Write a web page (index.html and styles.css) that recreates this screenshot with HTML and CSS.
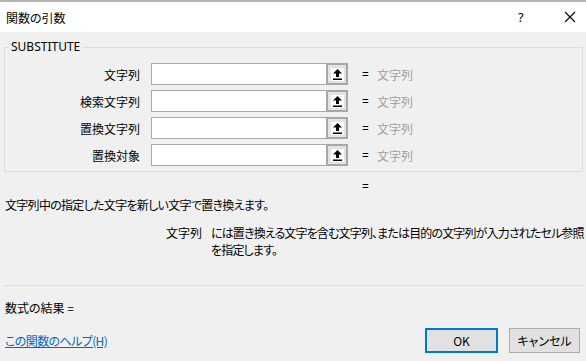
FILE: index.html
```html
<!DOCTYPE html>
<html lang="ja">
<head>
    <meta charset="UTF-8">
    <title>関数の引数</title>
    <link rel="stylesheet" href="styles.css">
</head>
<body>
    <div class="dialog">
        <div class="titlebar">
            <span class="title">関数の引数</span>
            <span class="title-help">?</span>
            <span class="title-close">
                <svg width="12" height="12" viewBox="0 0 12 12"><path d="M1 1 L11 11 M11 1 L1 11" stroke="#000" stroke-width="1.1" fill="none"/></svg>
            </span>
        </div>

        <div class="body">
            <fieldset class="args">
                <legend>SUBSTITUTE</legend>
                <div class="arg-row">
                    <label class="arg-label">文字列</label>
                    <div class="arg-input"></div>
                    <button class="ref-btn"><svg class="ref-icon" width="13" height="13" viewBox="0 0 13 13"><path d="M6.5 1 L11 5.5 L8 5.5 L8 9 L5 9 L5 5.5 L2 5.5 Z" fill="#000"/><rect x="2" y="10.5" width="9" height="1.5" fill="#000"/></svg></button>
                    <span class="arg-eq">=</span>
                    <span class="arg-value">文字列</span>
                </div>
                <div class="arg-row">
                    <label class="arg-label">検索文字列</label>
                    <div class="arg-input"></div>
                    <button class="ref-btn"><svg class="ref-icon" width="13" height="13" viewBox="0 0 13 13"><path d="M6.5 1 L11 5.5 L8 5.5 L8 9 L5 9 L5 5.5 L2 5.5 Z" fill="#000"/><rect x="2" y="10.5" width="9" height="1.5" fill="#000"/></svg></button>
                    <span class="arg-eq">=</span>
                    <span class="arg-value">文字列</span>
                </div>
                <div class="arg-row">
                    <label class="arg-label">置換文字列</label>
                    <div class="arg-input"></div>
                    <button class="ref-btn"><svg class="ref-icon" width="13" height="13" viewBox="0 0 13 13"><path d="M6.5 1 L11 5.5 L8 5.5 L8 9 L5 9 L5 5.5 L2 5.5 Z" fill="#000"/><rect x="2" y="10.5" width="9" height="1.5" fill="#000"/></svg></button>
                    <span class="arg-eq">=</span>
                    <span class="arg-value">文字列</span>
                </div>
                <div class="arg-row">
                    <label class="arg-label">置換対象</label>
                    <div class="arg-input"></div>
                    <button class="ref-btn"><svg class="ref-icon" width="13" height="13" viewBox="0 0 13 13"><path d="M6.5 1 L11 5.5 L8 5.5 L8 9 L5 9 L5 5.5 L2 5.5 Z" fill="#000"/><rect x="2" y="10.5" width="9" height="1.5" fill="#000"/></svg></button>
                    <span class="arg-eq">=</span>
                    <span class="arg-value">文字列</span>
                </div>
            </fieldset>

            <div class="fn-eq">=</div>
            <div class="fn-desc">文字列中の指定した文字を新しい文字で置き換えます。</div>

            <div class="arg-help">
                <div class="arg-help-name">文字列</div>
                <div class="arg-help-text">には置き換える文字を含む文字列、または目的の文字列が入力されたセル参照<br>を指定します。</div>
            </div>

            <div class="separator"></div>

            <div class="result">数式の結果 =</div>

            <div class="footer">
                <a class="help-link" href="#">この関数のヘルプ(H)</a>
                <div class="buttons">
                    <button class="btn btn-ok">OK</button>
                    <button class="btn">キャンセル</button>
                </div>
            </div>
        </div>
    </div>
</body>
</html>
```

FILE: styles.css
```css
body {
    margin: 0;
    background: #f0f0f0;
    font-family: "Noto Sans CJK JP", "Noto Sans", sans-serif;
    font-size: 12px;
    color: #000;
    font-feature-settings: "palt";
}

.dialog {
    width: 586px;
    height: 361px;
    overflow: hidden;
    background: #f0f0f0;
}

.titlebar {
    height: 30px;
    border-top: 2px solid #b4b4b4;
    background: #fff;
    display: flex;
    align-items: center;
    padding-left: 6px;
}

.title {
    flex-grow: 1;
    font-size: 12px;
}

.title-help {
    width: 20px;
    margin-right: 26px;
    font-family: "Noto Sans", sans-serif;
    font-size: 13px;
}

.title-close {
    width: 20px;
    margin-right: 2px;
    display: flex;
    align-items: center;
}

.body {
    padding: 0 3px 0 4px;
}

.args {
    margin: 7px 0 0 0;
    padding: 8px 0 5px 0;
    border: 1px solid #dcdcdc;
    min-width: 0;
}

.args legend {
    margin-left: 4px;
    padding: 0 2px;
    line-height: 16px;
    font-family: "Noto Sans", sans-serif;
    font-size: 12px;
}

.arg-row {
    display: flex;
    align-items: center;
    height: 22px;
    margin-bottom: 5px;
}

.arg-row:last-child {
    margin-bottom: 0;
}

.arg-label {
    width: 135px;
    text-align: right;
    margin-right: 11px;
}

.arg-input {
    width: 174px;
    height: 20px;
    background: #fff;
    border: 1px solid #a9a9a9;
    border-right: none;
}

.ref-btn {
    width: 22px;
    height: 22px;
    padding: 0;
    margin: 0;
    border: 2px solid #a7a7a7;
    background: #e3e3e3;
    display: flex;
    align-items: center;
    justify-content: center;
}

.ref-icon {
    background: #fff;
}

.arg-eq {
    margin-left: 14px;
    width: 15px;
    font-family: "Noto Sans", sans-serif;
}

.arg-value {
    color: #a0a0a0;
}

.fn-eq {
    margin-top: 7px;
    padding-left: 358px;
    line-height: 16px;
    font-family: "Noto Sans", sans-serif;
}

.fn-desc {
    margin-top: 2px;
    padding-left: 1px;
    line-height: 16px;
    letter-spacing: -0.7px;
}

.arg-help {
    display: flex;
    margin-top: 11px;
    line-height: 17px;
}

.arg-help-name {
    flex-shrink: 0;
    width: 45px;
    margin-left: 162px;
    white-space: nowrap;
}

.arg-help-text {
    white-space: nowrap;
    letter-spacing: -0.85px;
}

.separator {
    margin-top: 27px;
    height: 1px;
    background: #dcdcdc;
}

.result {
    margin-top: 14px;
    padding-left: 1px;
    line-height: 16px;
}

.footer {
    display: flex;
    align-items: center;
    justify-content: space-between;
    margin-top: 12px;
}

.help-link {
    color: #0066cc;
    padding-left: 1px;
    letter-spacing: -0.6px;
}

.buttons {
    display: flex;
    gap: 11px;
    margin-right: 3px;
}

.btn {
    width: 71px;
    height: 25px;
    background: #e1e1e1;
    border: 1px solid #adadad;
    font-family: "Noto Sans CJK JP", sans-serif;
    font-size: 12px;
    font-feature-settings: "palt";
    padding: 0;
}

.btn-ok {
    width: 73px;
    border: 2px solid #0078d7;
}
```
